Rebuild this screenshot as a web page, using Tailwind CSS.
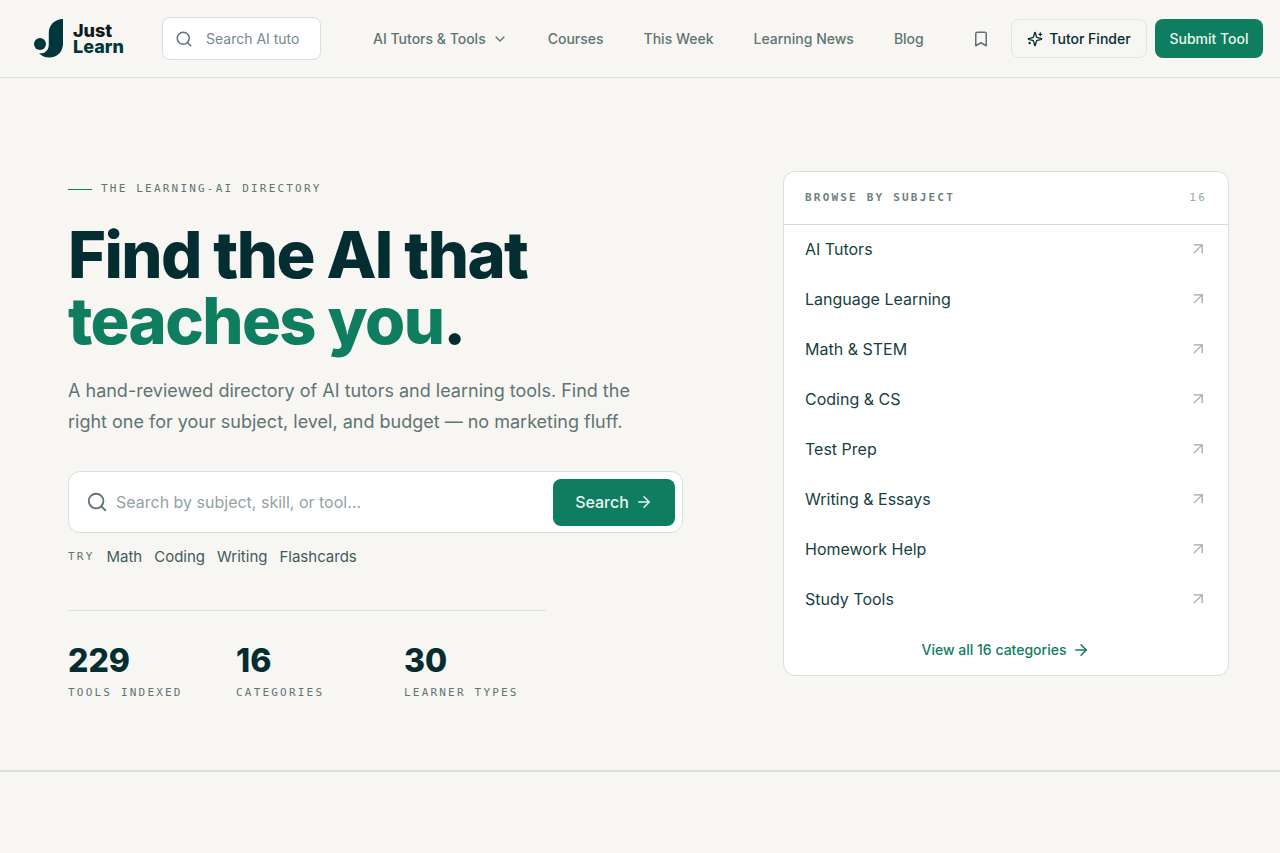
<!DOCTYPE html>
<html lang="en">
<head>
<meta charset="utf-8">
<meta name="viewport" content="width=device-width, initial-scale=1">
<title>Just Learn</title>
<script src="https://cdn.jsdelivr.net/npm/@tailwindcss/browser@4"></script>
</head>
<body class="min-h-screen bg-[#f7f6f2] font-['Inter',sans-serif] text-[#032d30]">
<svg class="hidden" aria-hidden="true">
  <symbol id="search" viewBox="0 0 24 24"><circle cx="11" cy="11" r="8"/><path d="m21 21-4.3-4.3"/></symbol>
  <symbol id="up-right" viewBox="0 0 24 24"><path d="M7 7h10v10"/><path d="M7 17 17 7"/></symbol>
  <symbol id="right" viewBox="0 0 24 24"><path d="M5 12h14"/><path d="m12 5 7 7-7 7"/></symbol>
</svg>

<header class="flex h-[78px] items-center border-b border-[#d5e0df] pr-[17px] pl-[34px]">
  <a href="#" class="flex w-[128px] shrink-0 items-center gap-[9px]">
    <svg class="h-[39px] w-[30px] shrink-0" viewBox="0 0 30 39" fill="#00373c"><path d="M29 0v24.500C29 33 23 38.500 15.500 38.500c-4.600 0-8-1.500-10.300-4.300C11.200 35 14.800 31 14.800 25.500V14C14.800 6 20.500.3 29 0Z"/><circle cx="6" cy="25" r="6"/></svg>
    <span class="text-[18px] leading-4 font-extrabold"><span class="block text-[#111817]">Just</span><span class="block text-[#00373c]">Learn</span></span>
  </a>
  <label class="flex h-[43px] w-[159px] shrink-0 items-center gap-[13px] rounded-lg border border-[#d5e0df] bg-white pr-[21px] pl-[12px]">
    <svg class="size-[18px] shrink-0 fill-none stroke-[#5f7475] stroke-2 [stroke-linecap:round]"><use href="#search"/></svg>
    <input type="text" aria-label="Search tools" placeholder="Search AI tutors" class="w-full min-w-0 text-sm outline-none placeholder:text-[#75888a]">
  </label>
  <nav class="ml-[52px] flex shrink-0 items-center gap-[40px] text-sm font-medium whitespace-nowrap text-[#5f7475]">
    <button type="button" class="flex items-center gap-[6px]">AI Tutors &amp; Tools
      <svg class="size-4 fill-none stroke-current stroke-2 [stroke-linecap:round] [stroke-linejoin:round]" viewBox="0 0 24 24"><path d="m6 9 6 6 6-6"/></svg>
    </button>
    <a href="#">Courses</a>
    <a href="#">This Week</a>
    <a href="#">Learning News</a>
    <a href="#">Blog</a>
  </nav>
  <div class="ml-auto flex shrink-0 items-center gap-2 text-sm font-medium whitespace-nowrap">
    <button type="button" aria-label="Bookmarks" class="mr-[13px] text-[#5f7475]">
      <svg class="size-[18px] fill-none stroke-current stroke-2 [stroke-linejoin:round]" viewBox="0 0 24 24"><path d="m19 21-7-4-7 4V5a2 2 0 0 1 2-2h10a2 2 0 0 1 2 2v16z"/></svg>
    </button>
    <button type="button" class="flex h-[39px] w-[136px] items-center justify-center gap-[6px] rounded-lg border border-[#dfe6e5]">
      <svg class="size-4 fill-none stroke-current stroke-2 [stroke-linecap:round] [stroke-linejoin:round]" viewBox="0 0 24 24"><path d="M9.940 15.500A2 2 0 0 0 8.500 14.060l-6.140-1.580a.5.5 0 0 1 0-.96L8.500 9.940A2 2 0 0 0 9.940 8.500l1.580-6.140a.5.5 0 0 1 .96 0L14.060 8.500A2 2 0 0 0 15.500 9.940l6.140 1.580a.5.5 0 0 1 0 .96L15.500 14.060a2 2 0 0 0-1.440 1.440l-1.580 6.140a.5.5 0 0 1-.96 0z"/><path d="M20 3v4M22 5h-4M4 17v2M5 18H3"/></svg>
      Tutor Finder
    </button>
    <button type="button" class="h-[39px] w-[108px] rounded-lg bg-[#0f7d5f] text-[#e9f5f0]">Submit Tool</button>
  </div>
</header>

<main>
  <section class="grid grid-cols-[615fr_446fr] gap-[100px] border-b-2 border-[#d5e0df] pt-[93px] pr-[51px] pb-[69px] pl-[68px]">
    <div class="pt-[10px]">
      <p class="flex items-center gap-[9px] font-['DejaVu_Sans_Mono',monospace] text-[11px] leading-4 tracking-[0.2em] text-[#5f7475]"><span class="h-px w-6 bg-[#0f7d5f]"></span>THE LEARNING-AI DIRECTORY</p>
      <h1 class="mt-[25px] text-[65px] leading-[66px] font-extrabold tracking-tight whitespace-nowrap">Find the AI that<br><span class="text-[#0f7d5f]">teaches you</span>.</h1>
      <p class="mt-[21px] text-lg leading-[31px] whitespace-nowrap text-[#5f7475]">A hand-reviewed directory of AI tutors and learning tools. Find the<br>right one for your subject, level, and budget — no marketing fluff.</p>
      <form class="mt-[34px] flex h-[62px] items-center rounded-xl border border-[#d5e0df] bg-white pr-[7px] pl-[17px]">
        <svg class="size-[22px] shrink-0 fill-none stroke-[#5f7475] stroke-2 [stroke-linecap:round]"><use href="#search"/></svg>
        <input type="text" aria-label="Search the directory" placeholder="Search by subject, skill, or tool…" class="ml-2 min-w-0 flex-1 text-base outline-none placeholder:text-[#93a3a3]">
        <button type="button" class="flex h-[47px] w-[122px] items-center justify-center gap-[6px] rounded-lg bg-[#0f7d5f] text-base font-medium text-[#e9f5f0]">Search
          <svg class="size-[18px] fill-none stroke-current stroke-2 [stroke-linecap:round] [stroke-linejoin:round]"><use href="#right"/></svg>
        </button>
      </form>
      <div class="mt-[14px] flex items-center gap-3 text-[15px] leading-5 text-[#3f5b5d]">
        <span class="font-['DejaVu_Sans_Mono',monospace] text-[11px] tracking-[0.2em] text-[#5f7475]">TRY</span>
        <a href="#">Math</a><a href="#">Coding</a><a href="#">Writing</a><a href="#">Flashcards</a>
      </div>
      <dl class="mt-[43px] grid w-[478px] grid-cols-[168px_168px_1fr] border-t border-[#d5e0df] pt-[32px]">
        <div class="flex flex-col-reverse gap-[6px]"><dt class="font-['DejaVu_Sans_Mono',monospace] text-[11px] leading-4 tracking-[0.2em] whitespace-nowrap text-[#5f7475]">TOOLS INDEXED</dt><dd class="text-[32px] leading-9 font-extrabold">229</dd></div>
        <div class="flex flex-col-reverse gap-[6px]"><dt class="font-['DejaVu_Sans_Mono',monospace] text-[11px] leading-4 tracking-[0.2em] whitespace-nowrap text-[#5f7475]">CATEGORIES</dt><dd class="text-[32px] leading-9 font-extrabold">16</dd></div>
        <div class="flex flex-col-reverse gap-[6px]"><dt class="font-['DejaVu_Sans_Mono',monospace] text-[11px] leading-4 tracking-[0.2em] whitespace-nowrap text-[#5f7475]">LEARNER TYPES</dt><dd class="text-[32px] leading-9 font-extrabold">30</dd></div>
      </dl>
    </div>

    <aside class="self-start overflow-hidden rounded-xl border border-[#d5e0df] bg-white">
      <div class="flex h-[53px] items-center justify-between border-b border-[#cfdddc] px-[21px] font-['DejaVu_Sans_Mono',monospace] text-[11px] tracking-[0.2em]">
        <h2 class="font-bold text-[#6d8182]">BROWSE BY SUBJECT</h2><span class="text-[#9aa9aa]">16</span>
      </div>
      <ul class="text-base text-[#173f42] [&_a]:flex [&_a]:h-[50px] [&_a]:items-center [&_a]:justify-between [&_a]:pr-[20px] [&_a]:pb-[2px] [&_a]:pl-[21px] [&_svg]:size-5 [&_svg]:fill-none [&_svg]:stroke-[#9aa9aa] [&_svg]:stroke-[1.5]">
        <li><a href="#">AI Tutors<svg><use href="#up-right"/></svg></a></li>
        <li><a href="#">Language Learning<svg><use href="#up-right"/></svg></a></li>
        <li><a href="#">Math &amp; STEM<svg><use href="#up-right"/></svg></a></li>
        <li><a href="#">Coding &amp; CS<svg><use href="#up-right"/></svg></a></li>
        <li><a href="#">Test Prep<svg><use href="#up-right"/></svg></a></li>
        <li><a href="#">Writing &amp; Essays<svg><use href="#up-right"/></svg></a></li>
        <li><a href="#">Homework Help<svg><use href="#up-right"/></svg></a></li>
        <li><a href="#">Study Tools<svg><use href="#up-right"/></svg></a></li>
      </ul>
      <a href="#" class="flex h-[50px] items-center justify-center gap-[6px] text-sm font-medium text-[#0f7d5f]">View all 16 categories
        <svg class="size-[18px] fill-none stroke-current stroke-2 [stroke-linecap:round] [stroke-linejoin:round]"><use href="#right"/></svg>
      </a>
    </aside>
  </section>
</main>
</body>
</html>
